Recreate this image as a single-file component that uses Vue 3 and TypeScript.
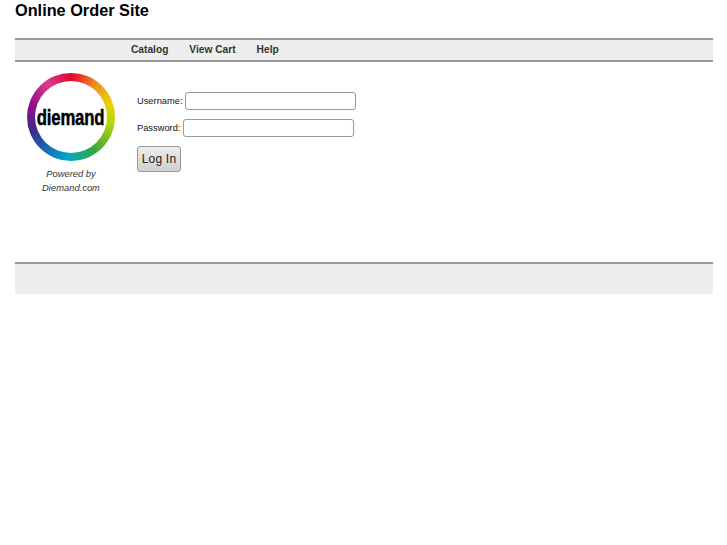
<script setup lang="ts">
const links: string[] = ['Catalog', 'View Cart', 'Help']
</script>

<template>
  <div class="page">
    <h1 class="title">Online Order Site</h1>
    <nav class="nav">
      <a v-for="l in links" :key="l" class="link">{{ l }}</a>
    </nav>
    <main class="main">
      <aside class="side">
        <div class="ring">
          <div class="ring-inner"><span class="brand">diemand</span></div>
        </div>
        <p class="powered">Powered by<br />Diemand.com</p>
      </aside>
      <form class="form" @submit.prevent>
        <label class="row"><span class="cap">Username:</span><input class="input" type="text" /></label>
        <label class="row"><span class="cap">Password:</span><input class="input" type="password" /></label>
        <button class="btn" type="button">Log In</button>
      </form>
    </main>
    <footer class="footer"></footer>
  </div>
</template>

<style>
html, body { margin: 0; background: #fff; }
</style>

<style scoped>
.page {
  padding: 0 14px 0 15px;
  font-family: "Liberation Sans", Arial, sans-serif;
  color: #111;
}
.title {
  margin: 0;
  height: 38px;
  box-sizing: border-box;
  font-size: 16.3px;
  line-height: 20px;
  font-weight: 700;
  color: #000;
}
.nav {
  display: flex;
  align-items: center;
  gap: 21px;
  height: 24px;
  box-sizing: border-box;
  padding: 0 0 2px 116px;
  background: #eeeeee;
  border-top: 2px solid #999;
  border-bottom: 2px solid #999;
}
.link {
  font-size: 10.2px;
  font-weight: 700;
  color: #333;
}
.main {
  display: flex;
  height: 200px;
}
.side {
  width: 112px;
  padding-top: 11px;
  display: flex;
  flex-direction: column;
  align-items: center;
}
.ring {
  width: 88px;
  height: 88px;
  border-radius: 50%;
  background: conic-gradient(#e2062c 0deg, #f08a1d 35deg, #f0d000 70deg, #b5d40a 100deg, #35a83f 145deg, #00a6c8 185deg, #1a63b0 222deg, #3a2a8c 250deg, #8b0f8c 285deg, #dc3a8a 325deg, #e2062c 360deg);
  display: flex;
  align-items: center;
  justify-content: center;
}
.ring-inner {
  width: 72px;
  height: 72px;
  border-radius: 50%;
  background: #fff;
  display: flex;
  align-items: center;
  justify-content: center;
  overflow: visible;
}
.brand {
  margin-top: 2px;
  font-size: 22px;
  font-weight: 700;
  color: #000;
  display: inline-block;
  transform: scaleX(0.76);
  -webkit-text-stroke: 0.5px #000;
  letter-spacing: -0.2px;
  white-space: nowrap;
}
.powered {
  margin: 6px 0 0;
  font-size: 9.4px;
  line-height: 14px;
  font-style: italic;
  text-align: center;
  color: #333;
}
.form {
  padding: 30px 0 0 10px;
  display: flex;
  flex-direction: column;
  align-items: flex-start;
}
.row {
  display: flex;
  align-items: center;
  gap: 3px;
  height: 18px;
  margin-bottom: 9px;
  font-size: 9.3px;
  color: #111;
}
.cap {
  padding-bottom: 1px;
}
.input {
  width: 171px;
  height: 18px;
  box-sizing: border-box;
  border: 1px solid #999;
  border-radius: 3px;
  background: #fff;
  padding: 0 3px;
  margin: 0;
}
.btn {
  width: 44px;
  height: 26px;
  padding: 0;
  font-family: "Liberation Sans", Arial, sans-serif;
  font-size: 12px;
  letter-spacing: 0.2px;
  color: #222;
  border: 1px solid #999;
  border-radius: 3px;
  background: linear-gradient(#ededed, #cfcfcf);
}
.footer {
  height: 32px;
  box-sizing: border-box;
  background: #eeeeee;
  border-top: 2px solid #999;
}
</style>
